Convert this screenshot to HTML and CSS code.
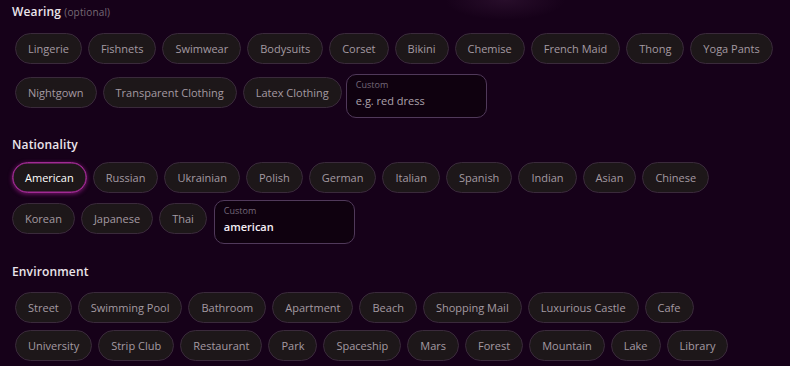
FILE: index.html
```html
<!DOCTYPE html>
<html lang="en">
<head>
<meta charset="utf-8">
<title>Options</title>
<link rel="stylesheet" href="styles.css">
</head>
<body>
<main class="panel">
  <section class="group group-wearing">
    <h2 class="group-title">Wearing <span class="optional">(optional)</span></h2>
    <div class="chips gap-13 inset">
      <div class="chip-row">
        <button class="chip">Lingerie</button>
        <button class="chip">Fishnets</button>
        <button class="chip">Swimwear</button>
        <button class="chip">Bodysuits</button>
        <button class="chip">Corset</button>
        <button class="chip">Bikini</button>
        <button class="chip">Chemise</button>
        <button class="chip">French Maid</button>
        <button class="chip">Thong</button>
        <button class="chip">Yoga Pants</button>
      </div>
      <div class="chip-row">
        <button class="chip">Nightgown</button>
        <button class="chip">Transparent Clothing</button>
        <button class="chip">Latex Clothing</button>
        <label class="custom">
          <span class="custom-label">Custom</span>
          <span class="custom-value placeholder">e.g. red dress</span>
        </label>
      </div>
    </div>
  </section>

  <section class="group group-nationality">
    <h2 class="group-title">Nationality</h2>
    <div class="chips gap-10">
      <div class="chip-row">
        <button class="chip selected">American</button>
        <button class="chip">Russian</button>
        <button class="chip">Ukrainian</button>
        <button class="chip">Polish</button>
        <button class="chip">German</button>
        <button class="chip">Italian</button>
        <button class="chip">Spanish</button>
        <button class="chip">Indian</button>
        <button class="chip">Asian</button>
        <button class="chip">Chinese</button>
      </div>
      <div class="chip-row">
        <button class="chip">Korean</button>
        <button class="chip">Japanese</button>
        <button class="chip">Thai</button>
        <label class="custom custom-wide-gap">
          <span class="custom-label">Custom</span>
          <span class="custom-value filled">american</span>
        </label>
      </div>
    </div>
  </section>

  <section class="group group-environment">
    <h2 class="group-title">Environment</h2>
    <div class="chips gap-7 inset">
      <div class="chip-row">
        <button class="chip">Street</button>
        <button class="chip">Swimming Pool</button>
        <button class="chip">Bathroom</button>
        <button class="chip">Apartment</button>
        <button class="chip">Beach</button>
        <button class="chip">Shopping Mail</button>
        <button class="chip">Luxurious Castle</button>
        <button class="chip">Cafe</button>
      </div>
      <div class="chip-row">
        <button class="chip">University</button>
        <button class="chip">Strip Club</button>
        <button class="chip">Restaurant</button>
        <button class="chip">Park</button>
        <button class="chip">Spaceship</button>
        <button class="chip">Mars</button>
        <button class="chip">Forest</button>
        <button class="chip">Mountain</button>
        <button class="chip">Lake</button>
        <button class="chip">Library</button>
      </div>
    </div>
  </section>
</main>
</body>
</html>
```
FILE: styles.css
```css
html, body {
  margin: 0;
  height: 100%;
}

body {
  background-color: #160119;
  background-image: radial-gradient(ellipse 60px 20px at 505px 0, rgba(120, 70, 120, 0.18), rgba(22, 1, 25, 0) 100%);
  font-family: "Open Sans", "Noto Sans", sans-serif;
  color: #a69ca4;
  overflow: hidden;
}

.panel {
  padding: 4px 12px 0;
  display: flex;
  flex-direction: column;
}

.group + .group {
  margin-top: 19px;
}

.group-nationality + .group-environment {
  margin-top: 20px;
}

.group-title {
  margin: 0;
  font-size: 12px;
  line-height: 15px;
  font-weight: 600;
  color: #ebe5eb;
  letter-spacing: 0.15px;
}

.optional {
  font-size: 10px;
  font-weight: 400;
  color: #766a76;
}

.chips {
  display: flex;
  flex-direction: column;
  margin-top: 10px;
}

.chips.inset {
  margin-top: 13px;
  padding-left: 3px;
}

.chips.gap-13 { row-gap: 13px; }
.chips.gap-10 { row-gap: 10px; }
.chips.gap-7 { row-gap: 7px; }

.chip-row {
  display: flex;
  align-items: flex-start;
  column-gap: 6px;
}

.chip {
  box-sizing: border-box;
  height: 31px;
  padding: 0 12px;
  display: inline-flex;
  align-items: center;
  justify-content: center;
  flex: none;
  border: 1px solid #3a2a3b;
  border-radius: 999px;
  background: #1d1719;
  color: #a49aa2;
  font-family: inherit;
  font-size: 11px;
  font-weight: 400;
  line-height: 14px;
  white-space: nowrap;
  cursor: pointer;
}

.chip.selected {
  border: 1px solid #a12a94;
  color: #ffffff;
  font-weight: 500;
  box-shadow: 0 1px 4px rgba(196, 40, 176, 0.55), inset 0 0 0 0.5px #a12a94;
}

.custom {
  box-sizing: border-box;
  width: 141px;
  height: 44px;
  margin-top: -3px;
  margin-left: -2px;
  padding: 4px 9px 0;
  display: flex;
  flex-direction: column;
  row-gap: 4px;
  border: 1px solid #50395a;
  border-radius: 10px;
  background: #0f010f;
  flex: none;
}

.custom.custom-wide-gap {
  margin-left: 1px;
}

.custom-label {
  font-size: 9px;
  line-height: 11px;
  color: #75697a;
}

.custom-value {
  font-size: 11px;
  line-height: 14px;
}

.custom-value.placeholder {
  color: #aca2ab;
}

.custom-value.filled {
  color: #f4eef4;
  font-weight: 600;
}
```
